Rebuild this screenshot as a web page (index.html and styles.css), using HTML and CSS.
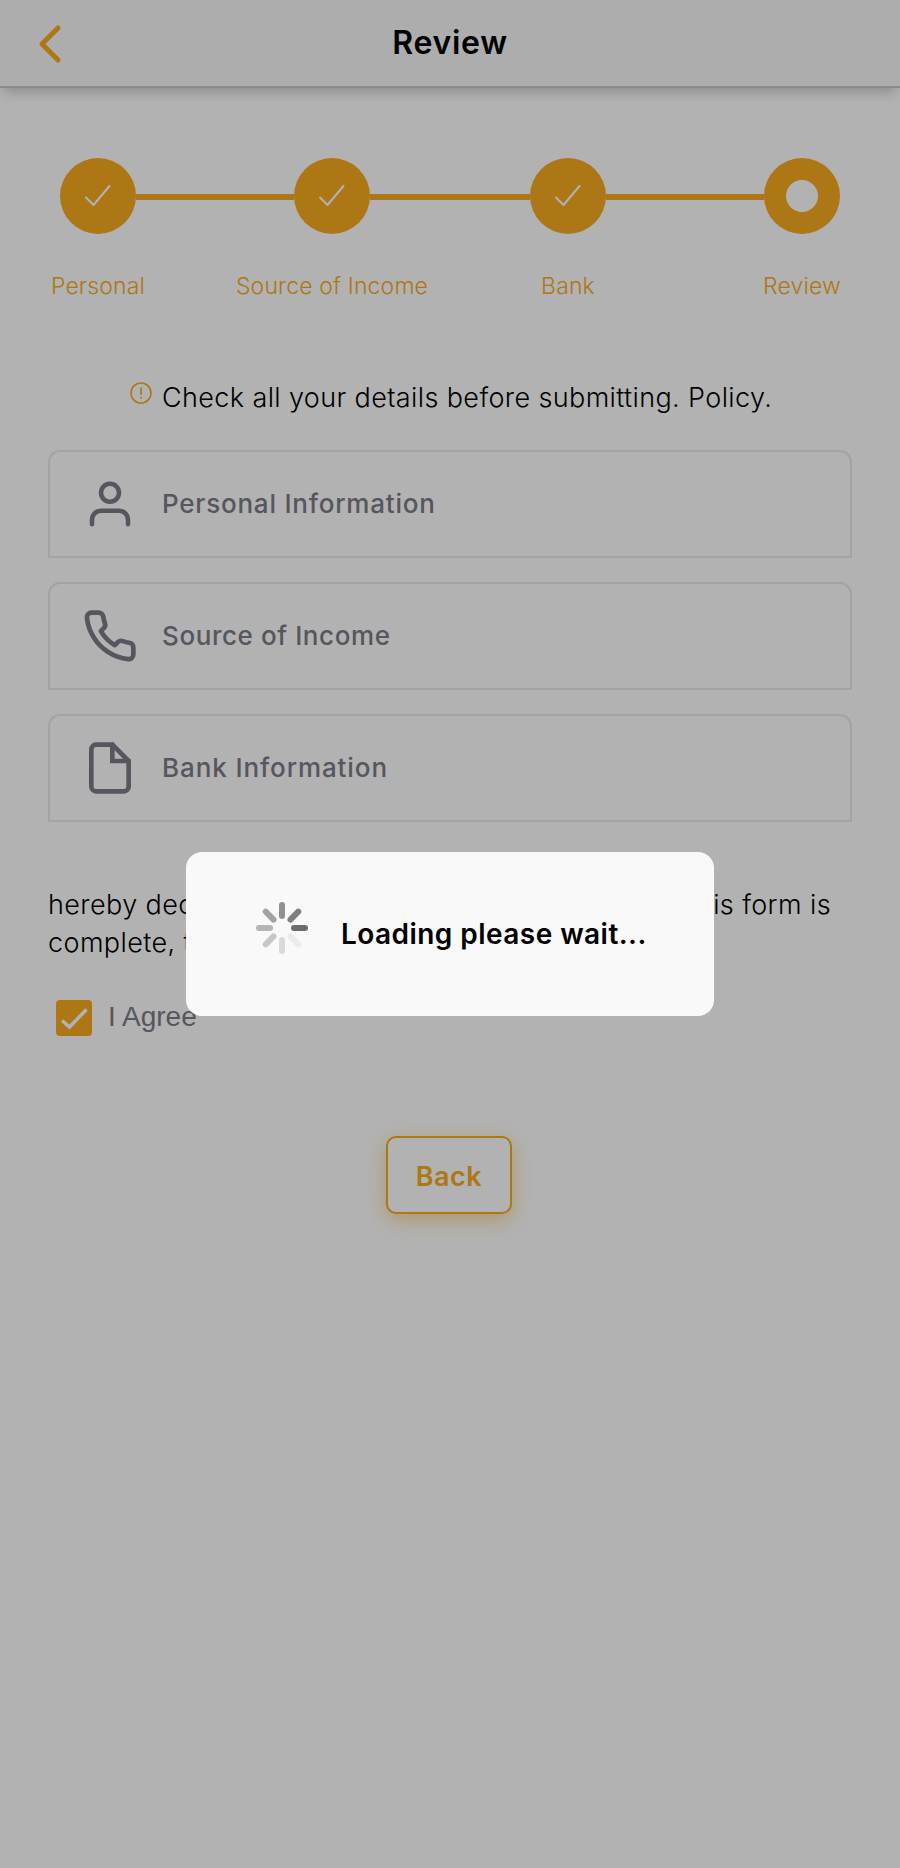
FILE: index.html
```html
<!DOCTYPE html>
<html lang="en">
<head>
<meta charset="utf-8">
<title>Review</title>
<link rel="stylesheet" href="styles.css">
</head>
<body>
<header class="header">
  <svg class="back-icon" viewBox="0 0 24 40" width="24" height="40"><path d="M20 4 4 20 20 36" /></svg>
  <h1 class="title">Review</h1>
</header>
<main class="main">
  <div class="stepper">
    <div class="step"><div class="dot"><svg class="tick" viewBox="0 0 28 24"><path d="M2 13.500 9.500 21 25.500 2" /></svg></div><span class="label">Personal</span></div>
    <div class="line line-short"></div>
    <div class="step"><div class="dot"><svg class="tick" viewBox="0 0 28 24"><path d="M2 13.500 9.500 21 25.500 2" /></svg></div><span class="label">Source of Income</span></div>
    <div class="line"></div>
    <div class="step"><div class="dot"><svg class="tick" viewBox="0 0 28 24"><path d="M2 13.500 9.500 21 25.500 2" /></svg></div><span class="label">Bank</span></div>
    <div class="line line-short"></div>
    <div class="step"><div class="dot"><div class="hole"></div></div><span class="label">Review</span></div>
  </div>

  <p class="notice">
    <svg class="info" viewBox="0 0 22 22"><circle cx="11" cy="11" r="10" /><path d="M11 5.500v7.500M11 14.700v1.800" /></svg>
    <span>Check all your details before submitting. Policy.</span>
  </p>

  <div class="cards">
    <div class="card">
      <div class="icon"><svg class="user" viewBox="0 0 24 24"><circle cx="12" cy="7" r="4" /><path d="M20 21v-2a4 4 0 0 0-4-4H8a4 4 0 0 0-4 4v2" /></svg></div>
      <span class="name">Personal Information</span>
    </div>
    <div class="card">
      <div class="icon"><svg viewBox="0 0 24 24"><path d="M22 16.920v3a2 2 0 0 1-2.180 2 19.790 19.790 0 0 1-8.630-3.070 19.500 19.500 0 0 1-6-6 19.790 19.790 0 0 1-3.070-8.670A2 2 0 0 1 4.110 2h3a2 2 0 0 1 2 1.720 12.840 12.840 0 0 0 .7 2.810 2 2 0 0 1-.45 2.110L8.090 9.910a16 16 0 0 0 6 6l1.270-1.270a2 2 0 0 1 2.110-.45 12.840 12.840 0 0 0 2.810.7A2 2 0 0 1 22 16.920z" /></svg></div>
      <span class="name name-tight">Source of Income</span>
    </div>
    <div class="card">
      <div class="icon"><svg class="file" viewBox="0 0 24 24"><path d="M13 2H6a2 2 0 0 0-2 2v16a2 2 0 0 0 2 2h12a2 2 0 0 0 2-2V9z" /><path d="M13 2v7h7" /></svg></div>
      <span class="name name-wide">Bank Information</span>
    </div>
  </div>

  <p class="declare"><span class="row"><span>hereby declare that</span><span>information in this form is</span></span><span class="row">complete, true</span></p>

  <label class="agree">
    <span class="box"><svg viewBox="0 0 36 36"><path d="M6 20.500 13.500 27 30.500 9.500" /></svg></span>
    <span class="agree-text">I Agree</span>
  </label>

  <button class="back" type="button">Back</button>
</main>

<div class="overlay">
  <div class="modal">
    <svg class="spinner" viewBox="-26 -26 52 52">
      <path d="M12 0H23" stroke="#6b6b6b" />
      <path d="M12 0H23" stroke="#7f7f7f" transform="rotate(-45)" />
      <path d="M12 0H23" stroke="#919191" transform="rotate(-90)" />
      <path d="M12 0H23" stroke="#a3a3a3" transform="rotate(-135)" />
      <path d="M12 0H23" stroke="#b5b5b5" transform="rotate(180)" />
      <path d="M12 0H23" stroke="#c7c7c7" transform="rotate(135)" />
      <path d="M12 0H23" stroke="#d9d9d9" transform="rotate(90)" />
      <path d="M12 0H23" stroke="#ebebeb" transform="rotate(45)" />
    </svg>
    <span class="loading">Loading please wait...</span>
  </div>
</div>
</body>
</html>
```
FILE: styles.css
```css
* { box-sizing: border-box; }
body {
  margin: 0;
  height: 1868px;
  overflow: hidden;
  background: #fff;
  color: #000;
  font-family: Inter, "Open Sans", sans-serif;
}
svg { display: block; fill: none; stroke-linecap: round; stroke-linejoin: round; }

.header {
  display: flex;
  align-items: center;
  height: 88px;
  padding: 0 37px;
  background: #f8f8f8;
  border-bottom: 2px solid #c6c6c6;
  box-shadow: 0 8px 12px -4px rgba(0, 0, 0, .22);
}
.back-icon { flex: none; margin: 2px 0 0 1px; stroke: #f8ab1f; stroke-width: 5px; }
.title {
  flex: 1;
  margin: 0 25px 0 0;
  text-align: center;
  font-size: 32px;
  font-weight: 600;
  letter-spacing: .7px;
  line-height: 40px;
}

.main { padding: 70px 48px 0; }
.stepper { display: flex; padding: 0 12px; }
.step { display: flex; flex-direction: column; align-items: center; width: 76px; flex: none; }
.dot {
  display: flex;
  align-items: center;
  justify-content: center;
  width: 76px;
  height: 76px;
  border-radius: 50%;
  background: #f8ab1f;
}
.tick { width: 28px; height: 24px; stroke: #fff; stroke-width: 2px; }
.hole { width: 32px; height: 32px; border-radius: 50%; background: #fff; }
.line { flex: 1; height: 6px; margin-top: 36px; background: #f8ab1f; }
.line-short { flex: none; width: 158px; }
.label {
  margin-top: 36px;
  line-height: 32px;
  font-size: 23px;
  font-weight: 350;
  letter-spacing: .15px;
  white-space: nowrap;
  color: #f8ab1f;
}

.notice {
  display: flex;
  gap: 10px;
  margin: 76px 0 0;
  padding-left: 82px;
  font-size: 27px;
  font-weight: 300;
  letter-spacing: .38px;
  line-height: 40px;
  white-space: nowrap;
}
.info { width: 22px; height: 22px; margin-top: 4px; stroke: #f8ab1f; stroke-width: 1.6px; stroke-linecap: butt; }

.cards { display: flex; flex-direction: column; gap: 24px; margin-top: 32px; }
.card {
  display: flex;
  align-items: center;
  height: 108px;
  padding-left: 32px;
  border: 2px solid #e8e8f0;
  border-radius: 12px 12px 0 0;
  color: #7b7b88;
  font-size: 26px;
  font-weight: 500;
}
.name { padding-bottom: 2px; letter-spacing: .78px; }
.name-tight { letter-spacing: .58px; }
.name-wide { letter-spacing: .9px; }
.icon { display: flex; justify-content: center; width: 56px; margin-right: 24px; }
.icon svg { width: 56px; height: 56px; stroke: #7b7b88; stroke-width: 2px; }
.icon .user { width: 54px; height: 54px; }
.icon .file { stroke-linejoin: miter; }

.declare { margin: 64px 0 0; font-size: 27px; font-weight: 300; letter-spacing: .4px; line-height: 38px; }
.row { display: flex; justify-content: space-between; width: 783px; white-space: nowrap; }

.agree {
  display: flex;
  align-items: center;
  gap: 16px;
  height: 36px;
  margin: 38px 0 0 8px;
  color: #7b7b88;
  font: 28px "Liberation Sans", sans-serif;
}
.agree-text { padding-bottom: 2px; }
.box { width: 36px; height: 36px; border-radius: 4px; background: #f8ab1f; }
.box svg { stroke: #fff; stroke-width: 3.500px; stroke-linecap: butt; stroke-linejoin: miter; }

.back {
  display: block;
  width: 126px;
  height: 78px;
  margin: 100px 0 0 338px;
  padding: 2px 0 0;
  border: 2px solid #f8ab1f;
  border-radius: 10px;
  background: #fff;
  box-shadow: 0 6px 20px rgba(248, 171, 31, .45);
  color: #f8ab1f;
  font: 600 27px Inter, sans-serif;
  letter-spacing: .5px;
}

.overlay {
  position: fixed;
  inset: 0;
  display: flex;
  align-items: center;
  justify-content: center;
  background: rgba(0, 0, 0, .3);
}
.modal {
  display: flex;
  align-items: center;
  width: 528px;
  height: 164px;
  padding-left: 70px;
  border-radius: 16px;
  background: #f9f9f9;
}
.spinner { width: 52px; height: 52px; margin-top: -12px; stroke-width: 6px; }
.loading { margin-left: 33px; font-size: 28px; font-weight: 600; letter-spacing: .45px; line-height: 40px; white-space: nowrap; }
```
